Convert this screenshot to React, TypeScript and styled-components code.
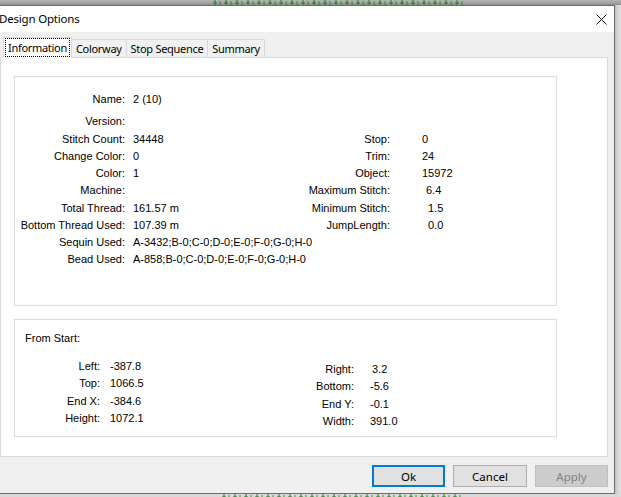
import React from 'react'
import styled, { createGlobalStyle } from 'styled-components'

const GlobalStyle = createGlobalStyle`
  html, body {
    margin: 0;
    padding: 0;
    overflow: hidden;
  }
  body {
    background: #d6d6d6;
    font-family: "Liberation Sans", Arial, sans-serif;
  }
`

const uiFont = `"Noto Sans", "Open Sans", sans-serif`

type Pair = { label: string; value?: string; shift?: number }

const infoRows: { left: Pair; right?: Pair }[] = [
  { left: { label: 'Name:', value: '2 (10)' } },
  { left: { label: 'Version:' } },
  { left: { label: 'Stitch Count:', value: '34448' }, right: { label: 'Stop:', value: '0' } },
  { left: { label: 'Change Color:', value: '0' }, right: { label: 'Trim:', value: '24' } },
  { left: { label: 'Color:', value: '1' }, right: { label: 'Object:', value: '15972' } },
  { left: { label: 'Machine:' }, right: { label: 'Maximum Stitch:', value: '6.4', shift: 4 } },
  { left: { label: 'Total Thread:', value: '161.57 m' }, right: { label: 'Minimum Stitch:', value: '1.5', shift: 6 } },
  { left: { label: 'Bottom Thread Used:', value: '107.39 m' }, right: { label: 'JumpLength:', value: '0.0', shift: 6 } },
  { left: { label: 'Sequin Used:', value: 'A-3432;B-0;C-0;D-0;E-0;F-0;G-0;H-0' } },
  { left: { label: 'Bead Used:', value: 'A-858;B-0;C-0;D-0;E-0;F-0;G-0;H-0' } },
]

const startLeft: Pair[] = [
  { label: 'Left:', value: '-387.8' },
  { label: 'Top:', value: '1066.5' },
  { label: 'End X:', value: '-384.6' },
  { label: 'Height:', value: '1072.1' },
]

const startRight: Pair[] = [
  { label: 'Right:', value: '3.2', shift: 2 },
  { label: 'Bottom:', value: '-5.6' },
  { label: 'End Y:', value: '-0.1' },
  { label: 'Width:', value: '391.0' },
]

const tabs = ['Information', 'Colorway', 'Stop Sequence', 'Summary']

const Stitches = ({ width }: { width: number }) => (
  <svg width={width} height={5} viewBox={`0 0 ${width} 5`}>
    <defs>
      <pattern id="st" width="11" height="5" patternUnits="userSpaceOnUse">
        <path d="M2 0v5M0 3h4" stroke="#1f7a1f" strokeWidth="1" />
        <path d="M7 1v4M6 4h3" stroke="#2f9a2f" strokeWidth="1" />
      </pattern>
    </defs>
    <rect width={width} height={5} fill="url(#st)" />
  </svg>
)

const App: React.FC = () => {
  return (
    <Page>
      <GlobalStyle />
      <TopStrip>
        <Stitches width={250} />
      </TopStrip>
      <Middle>
        <Dialog>
          <TitleBar>
            <Title>Design Options</Title>
            <Close>
              <svg width="11" height="11" viewBox="0 0 11 11">
                <path d="M0.5 0.5l10 10M10.5 0.5l-10 10" stroke="#111" strokeWidth="1" />
              </svg>
            </Close>
          </TitleBar>
          <Body>
            <TabRow>
              {tabs.map((t, i) => (
                <Tab key={t} active={i === 0}>
                  {i === 0 ? <Focus>{t}</Focus> : t}
                </Tab>
              ))}
            </TabRow>
            <Panel>
              <Group height={230}>
                <InfoGrid>
                  {infoRows.map((r, i) => (
                    <InfoRow key={i} first={i === 0}>
                      <Label width={110}>{r.left.label}</Label>
                      <Value width={157} pad={8}>{r.left.value}</Value>
                      {r.right && (
                        <>
                          <Label width={108}>{r.right.label}</Label>
                          <Value pad={32 + (r.right.shift ?? 0)}>{r.right.value}</Value>
                        </>
                      )}
                    </InfoRow>
                  ))}
                </InfoGrid>
              </Group>
              <Group height={118}>
                <StartTitle>From Start:</StartTitle>
                <StartCols>
                  <StartBlock width={275} drop={0}>
                    {startLeft.map(p => (
                      <InfoRow key={p.label}>
                        <Label width={85}>{p.label}</Label>
                        <Value pad={10}>{p.value}</Value>
                      </InfoRow>
                    ))}
                  </StartBlock>
                  <StartBlock width={200} drop={3}>
                    {startRight.map(p => (
                      <InfoRow key={p.label}>
                        <Label width={64}>{p.label}</Label>
                        <Value pad={16 + (p.shift ?? 0)}>{p.value}</Value>
                      </InfoRow>
                    ))}
                  </StartBlock>
                </StartCols>
              </Group>
            </Panel>
            <ButtonRow>
              <Button variant="default">Ok</Button>
              <Button variant="normal">Cancel</Button>
              <Button variant="disabled">Apply</Button>
            </ButtonRow>
          </Body>
        </Dialog>
        <Shadow />
      </Middle>
      <BottomStrip>
        <Stitches width={241} />
      </BottomStrip>
    </Page>
  )
}

const Page = styled.div`
  width: 621px;
  height: 497px;
  display: flex;
  flex-direction: column;
  overflow: hidden;
`

const TopStrip = styled.div`
  height: 5px;
  flex: none;
  padding-left: 213px;
  background: linear-gradient(#b4b4b4, #a2a2a2 60%, #8c8c8c);
  display: flex;
`

const Middle = styled.div`
  display: flex;
  flex: none;
`

const Dialog = styled.div`
  margin-left: -3px;
  width: 616px;
  height: 487px;
  border: 1px solid #6e6e6e;
  display: flex;
  flex-direction: column;
  background: #f0f0f0;
  flex: none;
`

const Shadow = styled.div`
  flex: 1;
  background: linear-gradient(90deg, #bdbdbd, #d9d9d9 3px, #dedede);
`

const BottomStrip = styled.div`
  flex: 1;
  padding-left: 222px;
  background: #d9d9d9;
  display: flex;
  align-items: flex-start;
`

const TitleBar = styled.div`
  height: 26px;
  background: #fff;
  display: flex;
  align-items: center;
  justify-content: space-between;
  padding: 0 7px 0 1px;
  flex: none;
`

const Title = styled.span`
  font-family: ${uiFont};
  font-size: 11.5px;
  letter-spacing: -0.2px;
  color: #000;
  margin-top: -2px;
`

const Close = styled.span`
  display: flex;
  width: 11px;
  height: 11px;
`

const Body = styled.div`
  flex: 1;
  display: flex;
  flex-direction: column;
  padding: 5px 6px 0 2px;
`

const TabRow = styled.div`
  display: flex;
  align-items: flex-end;
  height: 21px;
  padding-left: 3px;
  margin-bottom: -1px;
  position: relative;
  z-index: 1;
`

const Tab = styled.div<{ active?: boolean }>`
  font-family: ${uiFont};
  font-size: 11px;
  letter-spacing: -0.3px;
  color: #000;
  height: ${p => (p.active ? 21 : 19)}px;
  padding: 0 ${p => (p.active ? 1 : 4)}px;
  display: flex;
  align-items: center;
  border: 1px solid #d9d9d9;
  border-bottom: ${p => (p.active ? '1px solid #fff' : '1px solid #d9d9d9')};
  border-left-width: ${p => (p.active ? 1 : 0)}px;
  background: ${p => (p.active ? '#fff' : '#f0f0f0')};
  box-sizing: border-box;
  white-space: nowrap;
`

const Focus = styled.span`
  border: 1px dotted #000;
  padding: 0 2px;
  line-height: 17px;
`

const Panel = styled.div`
  height: 400px;
  background: #fff;
  border: 1px solid #d9d9d9;
  box-sizing: border-box;
  padding: 18px 0 0 13px;
  display: flex;
  flex-direction: column;
  gap: 13px;
`

const Group = styled.div<{ height: number }>`
  width: 543px;
  height: ${p => p.height}px;
  border: 1px solid #dcdcdc;
  box-sizing: border-box;
`

const InfoGrid = styled.div`
  display: flex;
  flex-direction: column;
  padding-top: 14px;
`

const InfoRow = styled.div<{ first?: boolean }>`
  display: flex;
  height: 17.25px;
  line-height: 17px;
  font-size: 11px;
  color: #000;
  margin-bottom: ${p => (p.first ? 5 : 0)}px;
  white-space: nowrap;
`

const Label = styled.span<{ width: number }>`
  width: ${p => p.width}px;
  flex: none;
  text-align: right;
`

const Value = styled.span<{ width?: number; pad: number }>`
  width: ${p => (p.width ? `${p.width}px` : 'auto')};
  flex: none;
  padding-left: ${p => p.pad}px;
  box-sizing: border-box;
`

const StartTitle = styled.div`
  font-size: 11px;
  line-height: 17px;
  padding: 10px 0 0 10px;
`

const StartCols = styled.div`
  display: flex;
  margin-top: 11px;
`

const StartBlock = styled.div<{ width: number; drop: number }>`
  width: ${p => p.width}px;
  margin-top: ${p => p.drop}px;
  display: flex;
  flex-direction: column;
`

const ButtonRow = styled.div`
  display: flex;
  justify-content: flex-end;
  gap: 8px;
  margin-top: 8px;
`

const Button = styled.button<{ variant: 'default' | 'normal' | 'disabled' }>`
  width: ${p => (p.variant === 'normal' ? 74 : 73)}px;
  height: 22px;
  font-family: ${uiFont};
  font-size: 11.5px;
  padding: 0;
  border: 1px solid
    ${p => (p.variant === 'default' ? '#0078d7' : p.variant === 'normal' ? '#adadad' : '#bfbfbf')};
  box-shadow: ${p => (p.variant === 'default' ? 'inset 0 0 0 1px #0078d7' : 'none')};
  background: ${p => (p.variant === 'disabled' ? '#cccccc' : '#e1e1e1')};
  color: ${p => (p.variant === 'disabled' ? '#838383' : '#000')};
`

export default App
